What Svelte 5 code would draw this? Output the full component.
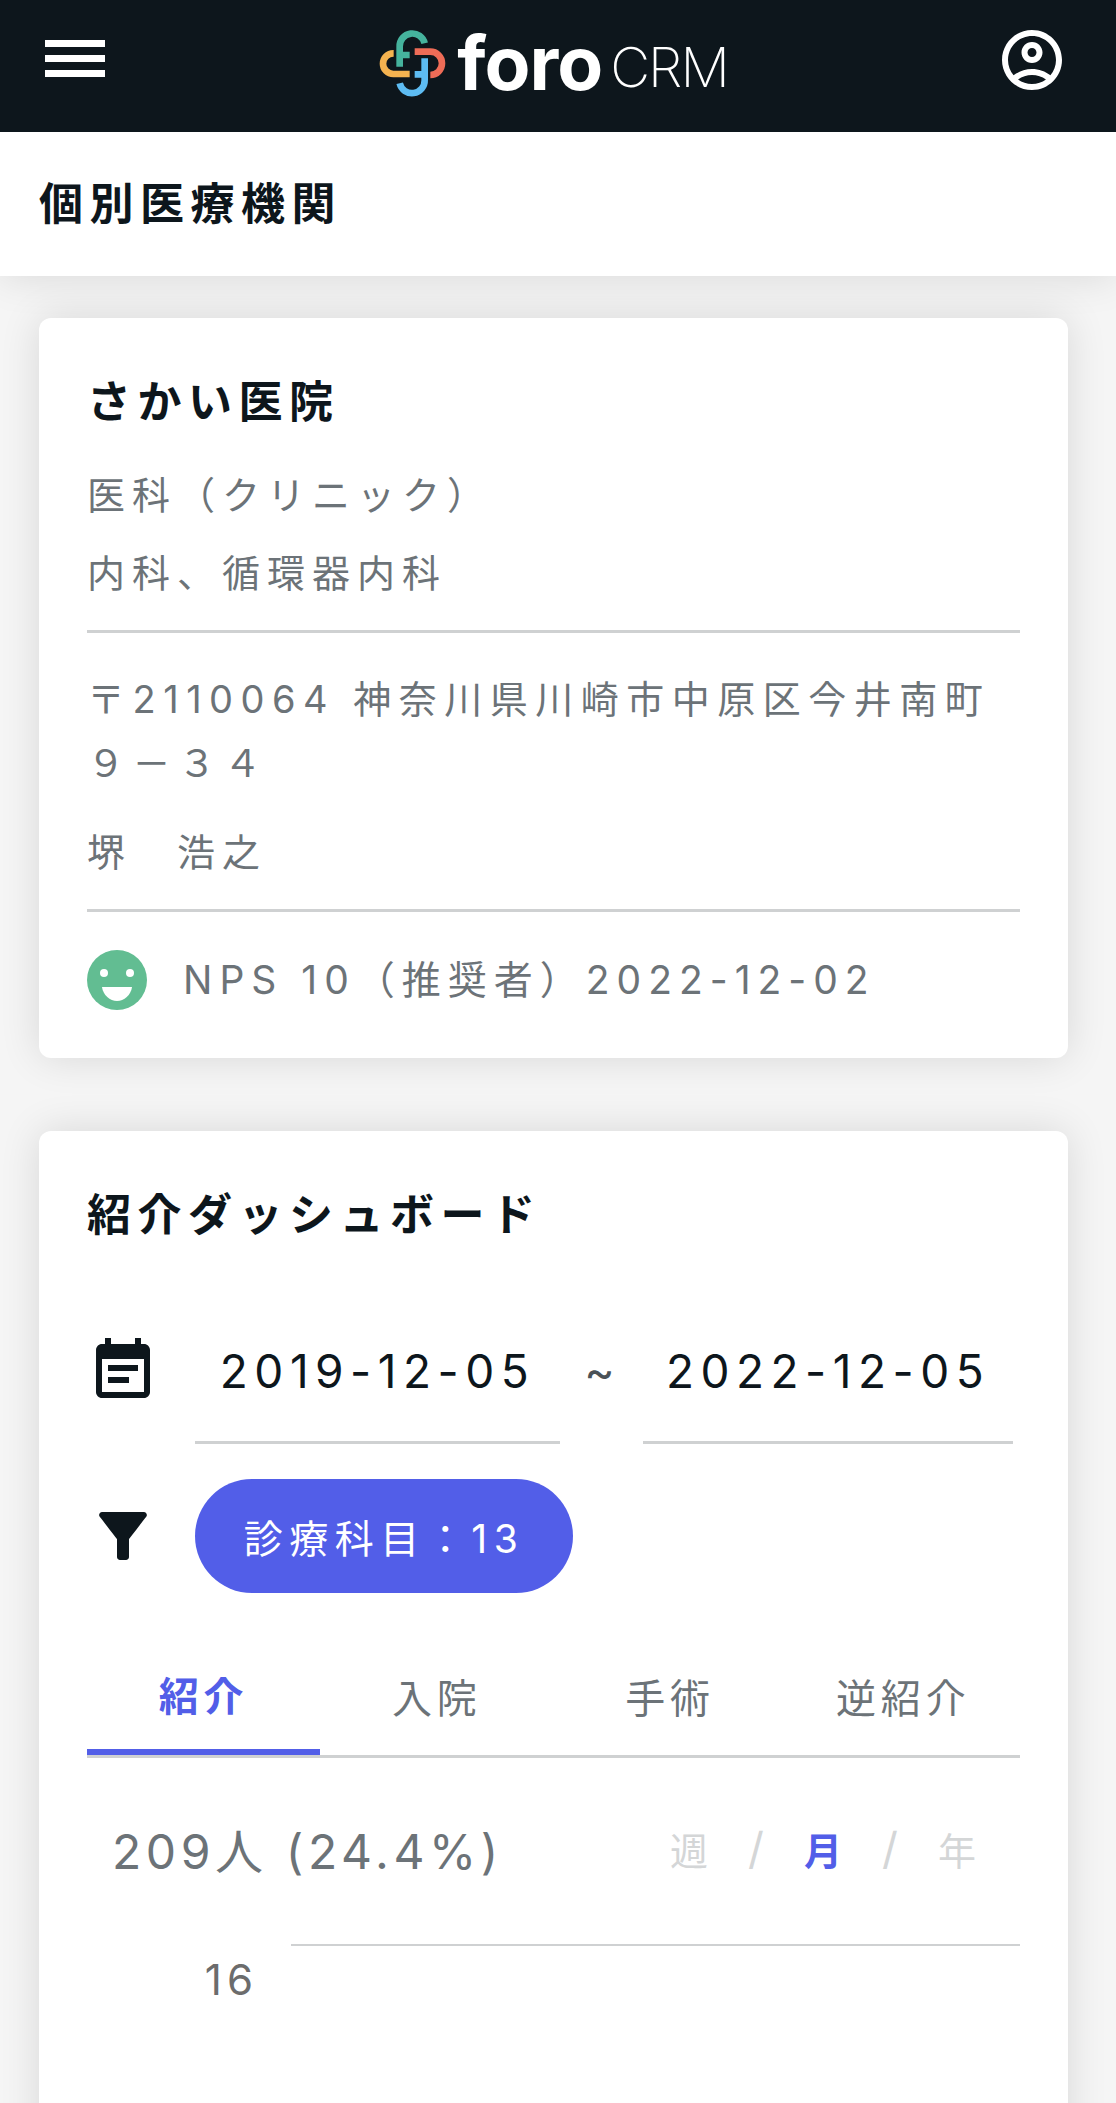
<script>
  const tabs = ['紹介', '入院', '手術', '逆紹介'];
  let activeTab = 0;
  const dates = ['2019-12-05', '2022-12-05'];
</script>

<div class="page">
  <header class="topbar">
    <div class="menu"><span></span><span></span><span></span></div>
    <div class="logo">
      <svg class="mark" viewBox="0 0 240 240" fill="none" stroke-width="20">
        <path stroke="#f4b350" d="M62 85H61A31 31 0 0 0 61 147H110" />
        <path stroke="#ee6c57" d="M125 80H172A35 35 0 0 1 172 150" />
        <path stroke="#45b39d" d="M80 125V65A38 38 0 0 1 155 55M80 90H110" />
        <path stroke="#5dbcf2" d="M155 100V165A38 38 0 0 1 80 175M125 148H155" />
      </svg>
      <span class="foro">foro</span><span class="crm">CRM</span>
    </div>
    <svg class="user" viewBox="0 0 24 24" fill="#fff">
      <path d="M12 2C6.48 2 2 6.48 2 12s4.48 10 10 10 10-4.48 10-10S17.52 2 12 2zM7.35 18.5C8.66 17.56 10.26 17 12 17s3.34.56 4.65 1.5C15.34 19.44 13.74 20 12 20s-3.34-.56-4.65-1.5zm10.79-1.38C16.45 15.8 14.32 15 12 15s-4.45.8-6.14 2.12C4.7 15.73 4 13.95 4 12c0-4.42 3.58-8 8-8s8 3.58 8 8c0 1.95-.7 3.73-1.86 5.12zM12 6c-1.93 0-3.5 1.57-3.5 3.5S10.07 13 12 13s3.5-1.57 3.5-3.5S13.93 6 12 6zm0 5c-.83 0-1.5-.67-1.5-1.5S11.17 8 12 8s1.5.67 1.5 1.5S12.83 11 12 11z" />
    </svg>
  </header>

  <div class="titlebar"><h1>個別医療機関</h1></div>

  <main>
    <section class="card info">
      <h2>さかい医院</h2>
      <p class="cat">医科（クリニック）</p>
      <p class="spec">内科、循環器内科</p>
      <hr />
      <p class="addr">〒2110064 神奈川県川崎市中原区今井南町<br />９－３４</p>
      <p class="person">堺　浩之</p>
      <hr />
      <div class="nps">
        <svg viewBox="0 0 60 60" class="face">
          <circle cx="30" cy="30" r="30" fill="#62bd92" />
          <circle cx="17" cy="23" r="4" fill="#fff" />
          <circle cx="43" cy="23" r="4" fill="#fff" />
          <path d="M15 37H45C44 45 37 51 30 51S16 45 15 37Z" fill="#fff" />
        </svg>
        <span>NPS 10（推奨者）2022-12-02</span>
      </div>
    </section>

    <section class="card dash">
      <h2>紹介ダッシュボード</h2>

      <div class="daterow">
        <svg class="ico" viewBox="0 0 24 24" fill="#0d161c">
          <path d="M17 10H7v2h10v-2zm2-7h-1V1h-2v2H8V1H6v2H5c-1.11 0-1.99.9-1.99 2L3 19c0 1.1.89 2 2 2h14c1.1 0 2-.9 2-2V5c0-1.1-.9-2-2-2zm0 16H5V8h14v11zm-5-5H7v2h7v-2z" />
        </svg>
        <div class="date">{dates[0]}</div>
        <span class="tilde">~</span>
        <div class="date second">{dates[1]}</div>
      </div>

      <div class="filterrow">
        <svg class="ico" viewBox="0 0 24 24" fill="#0d161c">
          <path d="M4.25 5.61C6.27 8.2 10 13 10 13v6c0 .55.45 1 1 1h2c.55 0 1-.45 1-1v-6s3.72-4.8 5.74-7.39C20.25 4.95 19.78 4 18.95 4H5.04c-.83 0-1.3.95-.79 1.61z" />
        </svg>
        <div class="pill">診療科目：13</div>
      </div>

      <div class="tabs">
        {#each tabs as tab, i}
          <div class="tab" class:active={i === activeTab}>{tab}</div>
        {/each}
      </div>

      <div class="stats">
        <span class="count">209人 (24.4%)</span>
        <div class="period">
          <span>週</span><i>/</i><span class="on">月</span><i>/</i><span>年</span>
        </div>
      </div>

      <div class="chart">
        <div class="ylabel">16</div>
        <div class="gridline"></div>
      </div>
    </section>
  </main>
</div>

<style>
  :global(body) {
    margin: 0;
    background: #f5f5f5;
  }

  .page {
    height: 2103px;
    overflow: hidden;
    font-family: Inter, "Noto Sans CJK JP", sans-serif;
    color: #0d161c;
  }

  .topbar {
    height: 132px;
    background: #0d161c;
    display: flex;
    align-items: flex-start;
    justify-content: space-between;
    padding: 24px 48px 0 45px;
    box-sizing: border-box;
    position: relative;
    z-index: 1;
  }

  .menu {
    width: 60px;
    display: flex;
    flex-direction: column;
    gap: 8px;
    margin-top: 16px;
  }

  .menu span {
    height: 7px;
    background: #fff;
  }

  .logo {
    display: flex;
    align-items: flex-start;
    margin-top: 1px;
    color: #fff;
  }

  .mark {
    width: 80px;
    height: 80px;
    margin-right: 4px;
  }

  .foro {
    font-size: 75px;
    line-height: 76px;
    font-weight: 700;
    letter-spacing: -1px;
  }

  .crm {
    font-size: 55px;
    line-height: 76px;
    padding-top: 4px;
    font-weight: 200;
    letter-spacing: -2px;
    margin-left: 8px;
  }

  .user {
    width: 72px;
    height: 72px;
  }

  .titlebar {
    height: 144px;
    box-sizing: border-box;
    padding: 0 0 6px 39px;
    background: #fff;
    display: flex;
    align-items: center;
    box-shadow: 0 0 40px rgba(0, 0, 0, 0.12);
    position: relative;
  }

  h1 {
    margin: 0;
    font-size: 44px;
    font-weight: 700;
    letter-spacing: 6.5px;
  }

  main {
    padding: 42px 48px 0 39px;
    display: flex;
    flex-direction: column;
    gap: 73px;
  }

  .card {
    background: #fff;
    border-radius: 12px;
    box-shadow: 0 0 40px rgba(0, 0, 0, 0.12);
    padding: 0 48px;
  }

  h2 {
    margin: 0;
    font-size: 44px;
    font-weight: 700;
    letter-spacing: 6.5px;
    line-height: 60px;
  }

  p {
    margin: 0;
    color: #6c7378;
    font-size: 38px;
    letter-spacing: 7px;
  }

  hr {
    border: 0;
    height: 3px;
    background: #cfd1d2;
    margin: 0;
  }

  .info {
    height: 740px;
    padding-top: 54px;
    box-sizing: border-box;
  }

  .cat {
    margin-top: 38px;
    line-height: 50px;
  }

  .spec {
    margin-top: 28px;
    line-height: 50px;
    margin-bottom: 32px;
  }

  .addr {
    margin-top: 34px;
    line-height: 64px;
    letter-spacing: 7.5px;
  }

  .person {
    margin-top: 32px;
    line-height: 50px;
    margin-bottom: 32px;
  }

  .nps {
    display: flex;
    align-items: center;
    gap: 36px;
    margin-top: 37px;
    color: #6c7378;
    font-size: 39px;
    letter-spacing: 7px;
  }

  .nps span {
    padding-bottom: 5px;
  }

  .face {
    width: 60px;
    height: 60px;
  }

  .dash {
    padding-top: 54px;
    height: 1500px;
    box-sizing: border-box;
  }

  .ico {
    width: 72px;
    height: 72px;
    flex: none;
  }

  .daterow {
    display: flex;
    align-items: flex-start;
    margin-top: 84px;
  }

  .daterow .ico {
    margin-top: 6px;
  }

  .date {
    width: 365px;
    height: 115px;
    line-height: 84px;
    margin-left: 36px;
    box-sizing: border-box;
    border-bottom: 3px solid #cfd1d2;
    text-align: center;
    font-size: 46px;
    letter-spacing: 6.5px;
  }

  .date.second {
    margin-left: 0;
    width: 370px;
  }

  .tilde {
    width: 79px;
    padding-right: 4px;
    text-align: center;
    font-size: 46px;
    line-height: 84px;
    color: #4a5257;
  }

  .filterrow {
    display: flex;
    align-items: center;
    gap: 36px;
    margin-top: 35px;
  }

  .pill {
    height: 114px;
    width: 378px;
    border-radius: 57px;
    background: #525ee8;
    color: #fff;
    font-size: 39px;
    letter-spacing: 6.5px;
    display: flex;
    align-items: center;
    justify-content: center;
  }

  .tabs {
    display: flex;
    margin-top: 48px;
    border-bottom: 3px solid #cfd1d2;
  }

  .tab {
    flex: 1;
    height: 114px;
    box-sizing: border-box;
    text-align: center;
    color: #6c7378;
    font-size: 40px;
    letter-spacing: 5px;
    line-height: 116px;
  }

  .tab.active {
    color: #525ee8;
    font-weight: 700;
    line-height: 112px;
    border-bottom: 6px solid #525ee8;
  }

  .stats {
    display: flex;
    justify-content: space-between;
    align-items: center;
    margin-top: 55px;
    padding: 0 44px 0 25px;
  }

  .count {
    font-size: 48px;
    letter-spacing: 4.6px;
    color: #6c7378;
  }

  .period {
    display: flex;
    align-items: center;
    font-size: 38px;
    color: #d4d6d7;
  }

  .period span {
    width: 38px;
  }

  .period i {
    width: 96px;
    text-align: center;
    font-style: normal;
    font-size: 44px;
  }

  .period .on {
    color: #525ee8;
    font-weight: 700;
  }

  .chart {
    display: grid;
    grid-template-columns: 171px 1fr;
    column-gap: 33px;
    margin-top: 61px;
  }

  .gridline {
    height: 2px;
    background: #cfd1d2;
    grid-column: 2;
    grid-row: 1;
  }

  .ylabel {
    grid-column: 1;
    grid-row: 1;
    text-align: right;
    font-size: 42px;
    color: #6c6c6c;
    letter-spacing: 5px;
    margin-top: 10px;
  }
</style>
